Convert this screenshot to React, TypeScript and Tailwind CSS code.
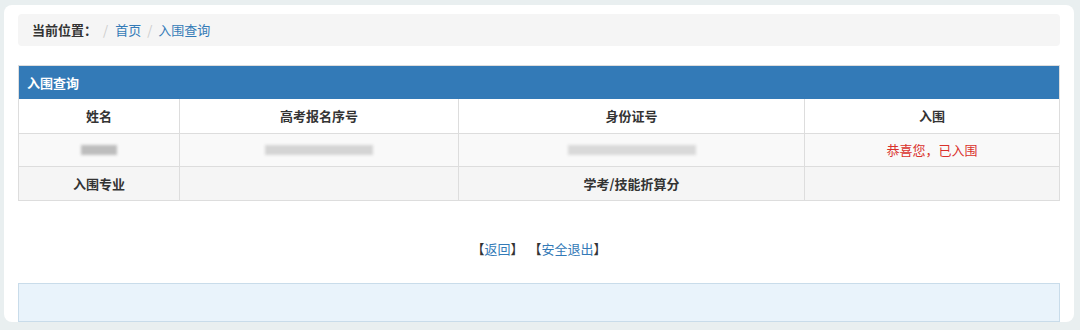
const font = { fontFamily: '"Noto Sans CJK SC", "Liberation Sans", sans-serif' };

function Blurred({ w, shade = "bg-[#c8c8c8]" }: { w: number; shade?: string }) {
  return (
    <div className="flex justify-center">
      <div className={`h-[10px] ${shade} blur-[1.5px]`} style={{ width: w }} />
    </div>
  );
}

export default function App() {
  return (
    <div
      className="h-[330px] w-[1080px] bg-[#e9eff0] pl-[4px] pt-[5px] text-[13px] text-[#333]"
      style={font}
    >
      <div className="h-[317px] w-[1070px] rounded-[8px] bg-white pl-[14px] pr-[10px] pt-[9px]">
        {/* breadcrumb */}
        <div className="flex h-[32px] w-[1042px] items-center rounded-[4px] bg-[#f5f5f5] px-[14px]">
          <span className="font-bold">当前位置：</span>
          <span className="ml-[6px] text-[#ccc]">/</span>
          <span className="ml-[7px] text-[#337ab7]">首页</span>
          <span className="mx-[6px] text-[#ccc]">/</span>
          <span className="text-[#337ab7]">入围查询</span>
        </div>

        {/* result panel */}
        <div className="mt-[19px] w-[1042px] border border-[#ddd]">
          <div className="flex h-[33px] items-center bg-[#337ab7] px-[8px] font-bold text-white">
            入围查询
          </div>
          <div className="grid grid-cols-[161px_279px_346px_1fr] text-center">
            <div className="flex h-[34px] items-center justify-center border-r border-[#ddd] font-bold">姓名</div>
            <div className="flex h-[34px] items-center justify-center border-r border-[#ddd] font-bold">高考报名序号</div>
            <div className="flex h-[34px] items-center justify-center border-r border-[#ddd] font-bold">身份证号</div>
            <div className="flex h-[34px] items-center justify-center font-bold">入围</div>

            <div className="flex h-[33px] items-center justify-center border-r border-t border-[#ddd] bg-[#f9f9f9]">
              <Blurred w={36} shade="bg-[#bdbdbd]" />
            </div>
            <div className="flex h-[33px] items-center justify-center border-r border-t border-[#ddd] bg-[#f9f9f9]">
              <Blurred w={108} shade="bg-[#d4d4d4]" />
            </div>
            <div className="flex h-[33px] items-center justify-center border-r border-t border-[#ddd] bg-[#f9f9f9]">
              <Blurred w={128} shade="bg-[#d9d9d9]" />
            </div>
            <div className="flex h-[33px] items-center justify-center border-t border-[#ddd] bg-[#f9f9f9] text-[#d9312b]">
              恭喜您，已入围
            </div>

            <div className="flex h-[34px] items-center justify-center border-r border-t border-[#ddd] bg-[#f5f5f5] font-bold">入围专业</div>
            <div className="h-[34px] border-r border-t border-[#ddd] bg-[#f5f5f5]" />
            <div className="flex h-[34px] items-center justify-center border-r border-t border-[#ddd] bg-[#f5f5f5] font-bold">学考/技能折算分</div>
            <div className="h-[34px] border-t border-[#ddd] bg-[#f5f5f5]" />
          </div>
        </div>

        {/* actions */}
        <div className="mt-[38px] flex w-[1042px] justify-center gap-[5px]">
          <span>【<a className="text-[#337ab7]">返回</a>】</span>
          <span>【<a className="text-[#337ab7]">安全退出</a>】</span>
        </div>

        <div className="mt-[24px] h-[39px] w-[1042px] border border-[#c9dcea] bg-[#e9f3fb]" />
      </div>
    </div>
  );
}
